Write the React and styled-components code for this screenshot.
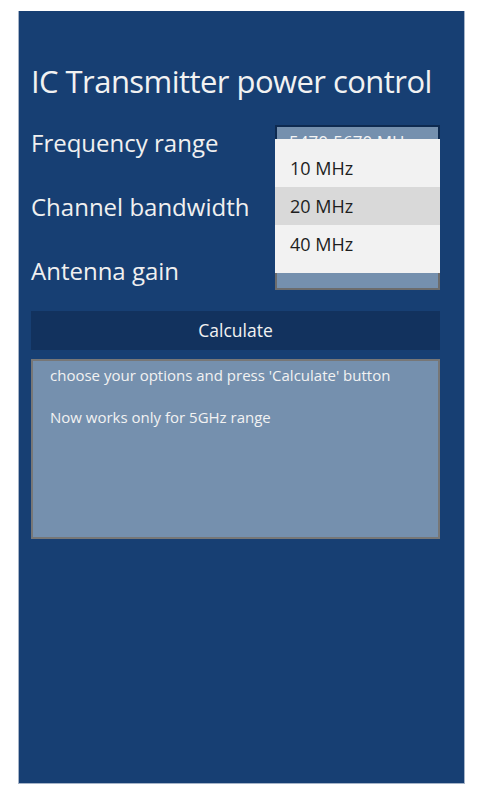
import React from "react";
import styled, { createGlobalStyle } from "styled-components";

const GlobalStyle = createGlobalStyle`
  body {
    margin: 0;
    background: #ffffff;
    font-family: "Open Sans", "Noto Sans", "Liberation Sans", sans-serif;
  }
`;

const Panel = styled.div`
  box-sizing: border-box;
  margin: 11px 0 0 18px;
  width: 447px;
  height: 773px;
  padding: 50px 24px 0 12px;
  background: #173f73;
  border: 1px solid #a6b4c8;
  border-top: none;
`;

const Title = styled.h1`
  margin: 0;
  font-size: 31px;
  line-height: 40px;
  font-weight: 400;
  color: #f2f2f2;
  white-space: nowrap;
  letter-spacing: -0.55px;
`;

const Form = styled.div`
  position: relative;
  margin-top: 10px;
  display: grid;
  grid-template-columns: 1fr 165px;
  grid-auto-rows: 64px;
  align-items: center;
`;

const Label = styled.div`
  font-size: 24px;
  line-height: 64px;
  color: #f0f0f0;
  white-space: nowrap;
`;

const Combo = styled.div`
  box-sizing: border-box;
  height: 37px;
  border: 2px solid ${(p) => (p.$dark ? "#0e2a50" : "#6c6c6c")};
  background: #7590ae;
  color: #f4f4f4;
  font-size: 17px;
  line-height: 30px;
  padding: 0 12px;
  overflow: hidden;
  white-space: nowrap;
  text-overflow: ellipsis;
`;

const Popup = styled.ul`
  position: absolute;
  top: 27.5px;
  right: 0;
  width: 165px;
  margin: 0;
  padding: 10px 0;
  list-style: none;
  background: #f2f2f2;
  box-sizing: border-box;
`;

const Option = styled.li`
  height: 38px;
  line-height: 38px;
  padding: 0 15px;
  font-size: 18px;
  color: #1e1e1e;
  background: ${(p) => (p.$selected ? "#d9d9d9" : "transparent")};
`;

const CalcButton = styled.button`
  display: block;
  width: 100%;
  height: 39px;
  margin-top: 7.5px;
  border: none;
  background: #12325e;
  color: #f2f2f2;
  font-family: inherit;
  font-size: 17.5px;
  line-height: 39px;
  padding: 0;
`;

const Output = styled.div`
  box-sizing: border-box;
  margin-top: 9px;
  height: 180px;
  border: 2px solid #777777;
  background: #7590ae;
  padding: 3px 17px;
`;

const OutLine = styled.p`
  margin: 0 0 20px;
  font-size: 15px;
  line-height: 22px;
  color: #f2f2f2;
`;

const fields = [
  { label: "Frequency range", value: "5470-5670 MHz", dark: true },
  { label: "Channel bandwidth", value: "" },
  { label: "Antenna gain", value: "" },
];

const options = ["10 MHz", "20 MHz", "40 MHz"];

export default function App() {
  return (
    <>
      <GlobalStyle />
      <Panel>
        <Title>IC Transmitter power control</Title>
        <Form>
          {fields.map((f) => (
            <React.Fragment key={f.label}>
              <Label>{f.label}</Label>
              <Combo $dark={f.dark}>{f.value}</Combo>
            </React.Fragment>
          ))}
          <Popup>
            {options.map((o) => (
              <Option key={o} $selected={o === "20 MHz"}>
                {o}
              </Option>
            ))}
          </Popup>
        </Form>
        <CalcButton>Calculate</CalcButton>
        <Output>
          <OutLine>choose your options and press 'Calculate' button</OutLine>
          <OutLine>Now works only for 5GHz range</OutLine>
        </Output>
      </Panel>
    </>
  );
}
